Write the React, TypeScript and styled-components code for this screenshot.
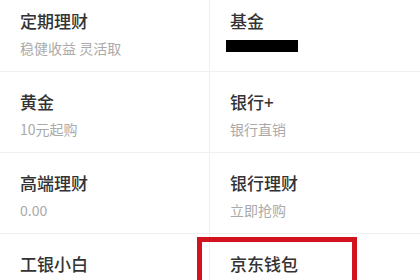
import React from "react";
import styled, { createGlobalStyle } from "styled-components";

const Global = createGlobalStyle`
  html, body { margin: 0; padding: 0; background: #fff; }
  body { width: 420px; height: 280px; overflow: hidden; }
`;

const Grid = styled.div`
  display: grid;
  grid-template-columns: 210px 210px;
  grid-auto-rows: 81px;
  margin-top: -9px;
  font-family: "Noto Sans CJK SC", "Noto Sans", sans-serif;
`;

const Cell = styled.div<{ $left?: boolean }>`
  position: relative;
  box-sizing: border-box;
  padding: 20px 0 0 20px;
  border-bottom: 1px solid #f0f0f0;
  border-right: ${(p) => (p.$left ? "1px solid #f0f0f0" : "none")};
  display: flex;
  flex-direction: column;
  gap: 9px;
`;

const Title = styled.div`
  font-size: 17px;
  line-height: 20px;
  color: #333;
  font-weight: 500;
`;

const Sub = styled.div`
  font-size: 14px;
  line-height: 16px;
  color: #aaa;
`;

const Mask = styled.div`
  margin-left: -4px;
  width: 72px;
  height: 12px;
  background: #000;
`;

const Highlight = styled.div`
  position: absolute;
  left: -13px;
  top: 3px;
  width: 160px;
  height: 90px;
  box-sizing: border-box;
  border: 5px solid #d2131f;
`;

type Item = { title: string; sub?: string; mask?: boolean; mark?: boolean };

const items: Item[] = [
  { title: "定期理财", sub: "稳健收益 灵活取" },
  { title: "基金", mask: true },
  { title: "黄金", sub: "10元起购" },
  { title: "银行+", sub: "银行直销" },
  { title: "高端理财", sub: "0.00" },
  { title: "银行理财", sub: "立即抢购" },
  { title: "工银小白" },
  { title: "京东钱包", mark: true },
];

export default function App() {
  return (
    <>
      <Global />
      <Grid>
        {items.map((it, i) => (
          <Cell key={i} $left={i % 2 === 0}>
            <Title>{it.title}</Title>
            {it.sub && <Sub>{it.sub}</Sub>}
            {it.mask && <Mask />}
            {it.mark && <Highlight />}
          </Cell>
        ))}
      </Grid>
    </>
  );
}
